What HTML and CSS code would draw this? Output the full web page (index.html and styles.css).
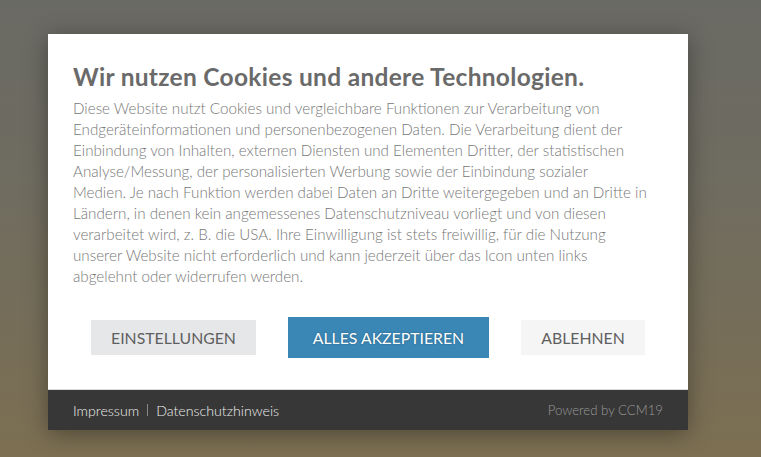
FILE: index.html
```html
<!DOCTYPE html>
<html lang="de">
<head>
    <meta charset="UTF-8">
    <meta name="viewport" content="width=device-width, initial-scale=1.0">
    <title>Cookie-Hinweis</title>
    <link rel="stylesheet" href="styles.css">
</head>
<body>
    <!-- Cookie-Dialog -->
    <div class="ccm-modal">
        <div class="ccm-body">
            <h1 class="ccm-title">Wir nutzen Cookies und andere Technologien.</h1>
            <p class="ccm-text">Diese Website nutzt Cookies und vergleichbare Funktionen zur Verarbeitung von<br>
                Endgeräteinformationen und personenbezogenen Daten. Die Verarbeitung dient der<br>
                Einbindung von Inhalten, externen Diensten und Elementen Dritter, der statistischen<br>
                Analyse/Messung, der personalisierten Werbung sowie der Einbindung sozialer<br>
                Medien. Je nach Funktion werden dabei Daten an Dritte weitergegeben und an Dritte in<br>
                Ländern, in denen kein angemessenes Datenschutzniveau vorliegt und von diesen<br>
                verarbeitet wird, z. B. die USA. Ihre Einwilligung ist stets freiwillig, für die Nutzung<br>
                unserer Website nicht erforderlich und kann jederzeit über das Icon unten links<br>
                abgelehnt oder widerrufen werden.</p>

            <div class="ccm-buttons">
                <button class="ccm-btn ccm-btn-settings">EINSTELLUNGEN</button>
                <button class="ccm-btn ccm-btn-accept">ALLES AKZEPTIEREN</button>
                <button class="ccm-btn ccm-btn-decline">ABLEHNEN</button>
            </div>
        </div>

        <!-- Fußzeile -->
        <footer class="ccm-footer">
            <div class="ccm-links">
                <a href="#">Impressum</a>
                <span class="ccm-sep"></span>
                <a href="#">Datenschutzhinweis</a>
            </div>
            <a href="#" class="ccm-powered">Powered by CCM19</a>
        </footer>
    </div>
</body>
</html>
```

FILE: styles.css
```css
/* Grundlagen */
* {
    margin: 0;
    padding: 0;
    box-sizing: border-box;
    font-family: 'Lato', 'Open Sans', sans-serif;
}

body {
    height: 100vh;
    overflow: hidden;
    background: linear-gradient(180deg, #6a6a64 0%, #6f6c60 40%, #7c6f52 100%);
    padding: 34px 0 0 48px;
}

/* Dialog */
.ccm-modal {
    width: 640px;
    background: #fff;
    box-shadow: 0 4px 22px rgba(0, 0, 0, 0.35);
}

.ccm-body {
    padding: 25px 25px 31px;
}

.ccm-title {
    font-size: 24.5px;
    font-weight: 700;
    color: #6a6a6a;
    line-height: 35px;
    letter-spacing: 0.3px;
}

.ccm-text {
    margin-top: 4px;
    font-size: 15.2px;
    font-weight: 300;
    line-height: 21px;
    color: #777;
    white-space: nowrap;
}

.ccm-buttons {
    display: flex;
    align-items: center;
    justify-content: space-between;
    margin-top: 30px;
    padding: 0 18px;
}

.ccm-btn {
    border: none;
    font-size: 15.8px;
    font-weight: 400;
    color: #5f5f5f;
    cursor: pointer;
    height: 35px;
}

.ccm-btn-settings {
    width: 165px;
    background: #e6e7e9;
}

.ccm-btn-accept {
    width: 201px;
    height: 41px;
    background: #3a87b6;
    color: #fff;
    text-shadow: 0 0 2px rgba(0, 0, 0, 0.35);
}

.ccm-btn-decline {
    width: 124px;
    background: #f5f5f5;
}

/* Fußzeile */
.ccm-footer {
    display: flex;
    align-items: center;
    justify-content: space-between;
    height: 41px;
    padding: 0 25px;
    background: #373737;
    border-top: 1px solid #dcdcdc;
}

.ccm-links {
    display: flex;
    align-items: center;
}

.ccm-links a {
    color: #eee;
    text-decoration: none;
    font-size: 14.2px;
    font-weight: 300;
}

.ccm-sep {
    width: 1px;
    height: 12px;
    background: #888;
    margin: 0 8px;
}

.ccm-powered {
    color: #999;
    text-decoration: none;
    font-size: 13.2px;
    font-weight: 300;
}
```
